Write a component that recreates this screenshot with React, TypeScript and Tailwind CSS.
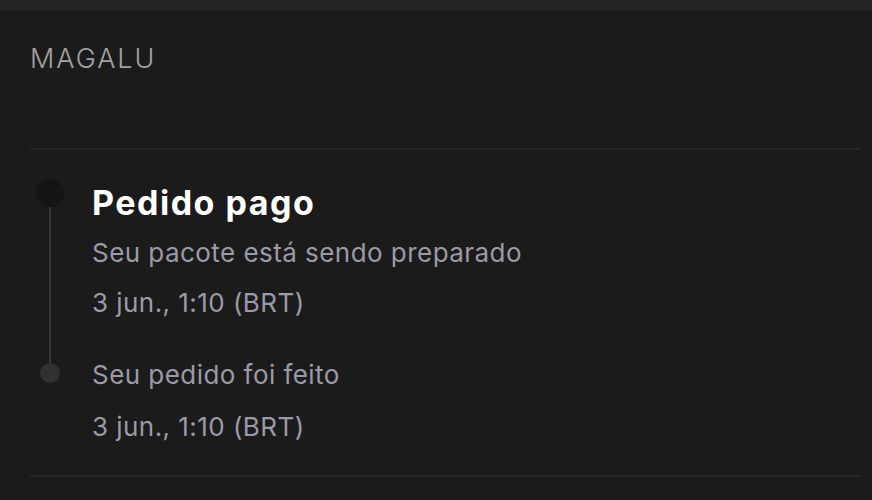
import React from "react";

export default function App() {
  return (
    <div className="w-[872px] h-[500px] bg-[#1b1b1b] overflow-hidden" style={{ fontFamily: "Inter, 'Noto Sans', sans-serif" }}>
      <div className="h-[10px] bg-[#232323]" />
      <div className="pl-[30px] pr-[12px]">
        <div className="h-[138px] pt-[32px]">
          <div className="text-[27px] leading-[34px] font-light text-[#a3a3a3] tracking-[2px]">MAGALU</div>
        </div>
        <div className="h-[2px] bg-[#262626]" />
        <div className="flex">
          <div className="w-[40px] flex flex-col items-center pt-[29px]">
            <div className="w-[28px] h-[28px] rounded-full bg-[#151515]" />
            <div className="w-[2px] h-[156px] bg-[#363636]" />
            <div className="w-[20px] h-[20px] rounded-full bg-[#313131]" />
          </div>
          <div className="ml-[22px] flex flex-col pt-[33px]">
            <div className="text-[34px] leading-[40px] font-bold text-white tracking-[1.5px]">Pedido pago</div>
            <div className="mt-[15px] text-[26px] leading-[30px] text-[#9c9aa8] tracking-[0.45px]">Seu pacote está sendo preparado</div>
            <div className="mt-[20px] text-[26px] leading-[30px] text-[#9c9aa8] tracking-[0.45px]">3 jun., 1:10 (BRT)</div>
            <div className="mt-[42px] text-[26px] leading-[30px] text-[#9c9aa8] tracking-[0.45px]">Seu pedido foi feito</div>
            <div className="mt-[22px] text-[26px] leading-[30px] text-[#9c9aa8] tracking-[0.45px]">3 jun., 1:10 (BRT)</div>
          </div>
        </div>
        <div className="mt-[33px] h-[2px] bg-[#262626]" />
      </div>
    </div>
  );
}
